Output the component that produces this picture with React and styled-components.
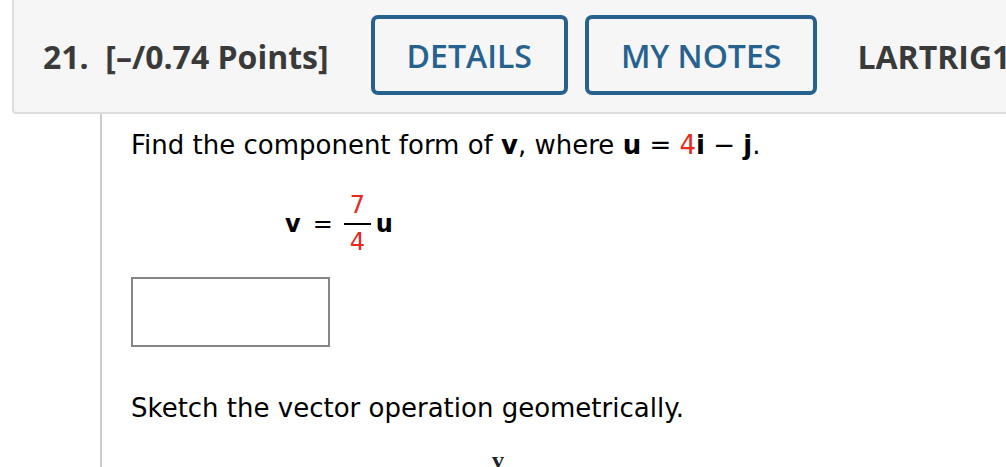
import React from "react";
import styled, { createGlobalStyle } from "styled-components";

const Global = createGlobalStyle`
    html, body {
        margin: 0;
        padding: 0;
        background: #ffffff;
        overflow: hidden;
    }
`;

export default function App() {
    return (
        <>
            <Global />
            <Page>
                <Header>
                    <Title>21.&nbsp; [–/0.74 Points]</Title>
                    <Actions>
                        <OutlineButton>DETAILS</OutlineButton>
                        <OutlineButton>MY NOTES</OutlineButton>
                    </Actions>
                    <Source>LARTRIG1</Source>
                </Header>
                <Body>
                    <Prompt>
                        Find the component form of <b>v</b>, where <b>u</b> = <Red>4</Red><b>i</b> − <b>j</b>.
                    </Prompt>
                    <Equation>
                        <b>v</b>
                        <Eq>=</Eq>
                        <Fraction>
                            <Red>7</Red>
                            <Red>4</Red>
                        </Fraction>
                        <b>u</b>
                    </Equation>
                    <AnswerBox />
                    <Prompt className="sketch">Sketch the vector operation geometrically.</Prompt>
                    <GraphLabel>v</GraphLabel>
                </Body>
            </Page>
        </>
    );
}

const Page = styled.div`
    width: 1006px;
    height: 467px;
    overflow: hidden;
`;

const Header = styled.div`
    display: flex;
    align-items: center;
    margin-left: 12px;
    height: 112px;
    padding-left: 29px;
    background-color: #f6f6f6;
    border-left: 2px solid #dddddd;
    border-bottom: 2px solid #dddddd;
    border-bottom-left-radius: 4px;
    white-space: nowrap;
    font-family: "Open Sans", sans-serif;
`;

const Title = styled.h2`
    margin: 0 42px 0 0;
    font-size: 32px;
    font-weight: 700;
    color: #3a3a3a;
`;

const Actions = styled.div`
    display: flex;
    gap: 17px;
    margin-top: -2px;
`;

const OutlineButton = styled.button`
    height: 80px;
    padding: 0 32px;
    background: transparent;
    border: 4px solid #27628f;
    border-radius: 7px;
    color: #27628f;
    font-family: "Open Sans", sans-serif;
    font-size: 32px;
    font-weight: 600;
    cursor: pointer;
`;

const Source = styled.span`
    margin-left: 40px;
    font-size: 32px;
    font-weight: 700;
    color: #3a3a3a;
`;

const Body = styled.div`
    margin-left: 100px;
    padding: 16px 0 0 29px;
    border-left: 2px solid #cccccc;
    height: 360px;
    font-family: "DejaVu Sans", Verdana, sans-serif;
    color: #000000;

    b {
        font-weight: 700;
    }
`;

const Prompt = styled.p`
    margin: 0;
    font-size: 26px;
    line-height: 30px;

    &.sketch {
        margin-top: 46px;
    }
`;

const Red = styled.span`
    color: #e8291c;
`;

const Equation = styled.div`
    display: flex;
    align-items: center;
    margin: 33px 0 0 154px;
    font-size: 24px;
    line-height: 1;

    b {
        font-weight: 700;
    }
`;

const Eq = styled.span`
    margin: 0 11px 0 12px;
`;

const Fraction = styled.span`
    display: inline-flex;
    flex-direction: column;
    align-items: center;
    width: 27px;
    margin-right: 5px;

    span:first-child {
        padding-bottom: 6px;
        border-bottom: 2px solid #000000;
        width: 100%;
        text-align: center;
    }

    span:last-child {
        padding-top: 5px;
    }
`;

const AnswerBox = styled.div`
    width: 195px;
    height: 66px;
    margin-top: 23px;
    border: 2px solid #858585;
`;

const GraphLabel = styled.div`
    margin: 22px 0 0 361px;
    font-family: "Liberation Serif", serif;
    font-weight: 700;
    font-size: 24px;
    line-height: 30px;
    color: #222222;
`;
